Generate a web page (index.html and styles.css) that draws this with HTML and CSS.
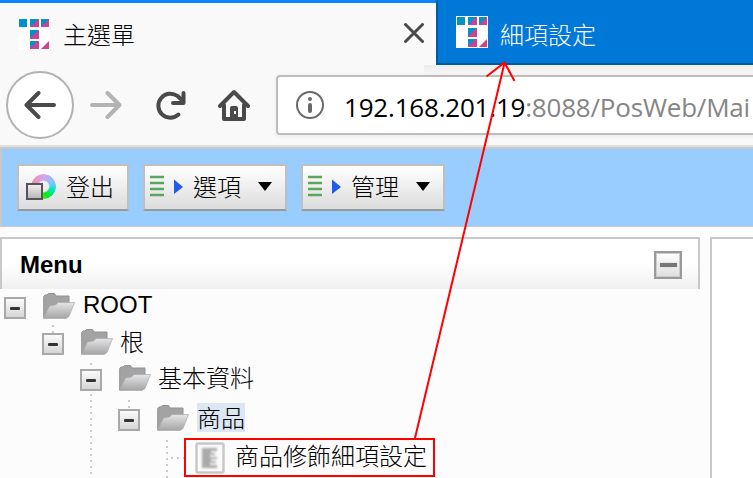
FILE: index.html
```html
<!DOCTYPE html>
<html lang="zh-Hant">
<head>
<meta charset="utf-8">
<title>主選單</title>
<link rel="stylesheet" href="styles.css">
</head>
<body>
<svg class="defs" width="0" height="0" aria-hidden="true">
  <defs>
    <linearGradient id="front" x1="0" y1="0" x2="0" y2="1"><stop offset="0" stop-color="#e4e5e7"/><stop offset="1" stop-color="#a4a4a4"/></linearGradient>
    <linearGradient id="square" x1="0" y1="0" x2="0" y2="1"><stop offset="0" stop-color="#f2f2f2"/><stop offset="1" stop-color="#b5b5b5"/></linearGradient>
    <filter id="soft"><feGaussianBlur stdDeviation="1"/></filter>
    <symbol id="logo" viewBox="0 0 32 32">
      <path fill="#fff" d="M0 0h32v32H0z"/>
      <path fill="#0292cb" d="M1 1h8v8H1zM12 1h9v8h-9zM23 1h8v8h-8zM12 12h9v9h-9zM12 23h9v8h-9z"/>
      <path fill="#cf4191" d="M12 9V8l3-1 3-4 3-2v8zM23 9l8-8v8zM12 21v-1l9-8v9zM12 31v-2l3-1 3-4 3-1v8zM23 31l8-8v8z"/>
    </symbol>
    <symbol id="folder" viewBox="0 0 32 27">
      <path fill="#a3a3a3" stroke="#929292" d="M.7 25V3.500L2 2h2l1.500-1.500h6L13 3h13v8L1 25z"/>
      <path fill="url(#front)" stroke="#aaa" stroke-width=".7" d="M.5 25.500 6.500 13l6-1L15 9.500h16.500L26 23.500l-3 2z"/>
    </symbol>
    <symbol id="list" viewBox="0 0 34 24">
      <path stroke="#5aa65c" stroke-width="2.600" d="M0 3h14M0 9h14M0 15h14M0 21h14"/>
      <path fill="#2459ee" d="M24 5.500l9 7.500-9 7z"/>
    </symbol>
  </defs>
</svg>

<header class="browser">
  <div class="tabs">
    <div class="tab active">
      <svg class="favicon"><use href="#logo"/></svg>
      <span class="tab-title">主選單</span>
      <svg class="close" viewBox="0 0 20 20"><path d="M1.500 1.500l17 17M18.500 1.500l-17 17"/></svg>
    </div>
    <div class="tab other">
      <svg class="favicon"><use href="#logo"/></svg>
      <span class="tab-title">細項設定</span>
    </div>
  </div>
  <div class="nav">
    <div class="back"><svg viewBox="0 0 32 28"><path d="M30 14H3M14.500 2L2.500 14l12 12"/></svg></div>
    <svg class="forward" viewBox="0 0 32 28"><path d="M2 14h27M17.500 2l12 12-12 12"/></svg>
    <svg class="reload" viewBox="0 0 31 30"><path d="M23.500 24.500A12 12 0 1 1 22.500 6L28 11"/><path d="M28.500 3v10H18"/></svg>
    <svg class="home" viewBox="0 0 32 33"><path d="M2 17L16 3l14 14M6 16v14h20V16"/><path class="fill" fill-rule="evenodd" d="M12 30V19q0-2 2-2h4q2 0 2 2v11zM16 22v3h2v-3z"/></svg>
    <div class="address">
      <svg class="info" viewBox="0 0 28 28"><circle cx="14" cy="14" r="13"/><path d="M14 14v6"/><path d="M14 8v.1"/></svg>
      <span class="url"><b>192.168.201.19</b>:8088/PosWeb/Mai</span>
    </div>
  </div>
</header>

<nav class="toolbar">
  <button class="button logout">
    <span class="icon"><i class="wheel"></i><svg viewBox="0 0 17 17"><rect x="1" y="1" width="15" height="15" fill="url(#square)" stroke="#555" stroke-width="2"/></svg></span>
    <span class="caption">登出</span>
  </button>
  <button class="button menu"><svg class="list"><use href="#list"/></svg><span class="caption">選項</span><i class="caret"></i></button>
  <button class="button menu"><svg class="list"><use href="#list"/></svg><span class="caption">管理</span><i class="caret"></i></button>
</nav>

<main class="content">
  <section class="side">
    <div class="panel-head"><h1>Menu</h1><span class="collapse"></span></div>
    <div class="tree">
      <svg class="guides" viewBox="0 0 250 189"><path d="M53 36v8M91 74v5M91 105v84M129 111v12M167 151v38M171 169h14"/></svg>
      <div class="row"><i class="toggle"></i><svg class="folder"><use href="#folder"/></svg><span class="label latin">ROOT</span></div>
      <div class="row l1"><i class="toggle"></i><svg class="folder"><use href="#folder"/></svg><span class="label">根</span></div>
      <div class="row l2"><i class="toggle"></i><svg class="folder"><use href="#folder"/></svg><span class="label">基本資料</span></div>
      <div class="row l3"><i class="toggle"></i><svg class="folder"><use href="#folder"/></svg><span class="label selected">商品</span></div>
      <div class="row leaf">
        <svg class="page" viewBox="0 0 30 32"><rect x="1.500" y="1.500" width="27" height="29" rx="1.500" fill="#fafafa" stroke="#c8c8c8" stroke-width="2.500"/><path filter="url(#soft)" fill="#aaa" d="M7 6h15v3h-6v2h4v2h-5v2h7v2h-6v2h5v2h-6v2h7v3H7z"/></svg>
        <span class="label">商品修飾細項設定</span>
      </div>
    </div>
  </section>
  <section class="pane"></section>
</main>

<svg class="annotation" viewBox="0 0 753 478"><rect x="185" y="439" width="249" height="37"/><path d="M415 438L504.500 63M486.500 76.500l18-14 10 18.500"/></svg>
</body>
</html>
```

FILE: styles.css
```css
* { box-sizing: border-box; }
body {
  margin: 0;
  width: 753px;
  height: 478px;
  overflow: hidden;
  position: relative;
  display: flex;
  flex-direction: column;
  background: #fcfcfc;
  color: #000;
  font: 300 24px "Noto Sans CJK TC", sans-serif;
}
svg { display: block; flex: none; fill: none; }
.defs { position: absolute; }

.browser { height: 147px; flex: none; background: #f9f9fa; border-bottom: 2px solid #e0e0e0; }
.tabs { display: flex; height: 65px; }
.tab { display: flex; align-items: center; }
.active { width: 436px; border-top: 3px solid #0a84ff; padding: 0 12px 0 18px; }
.other { flex: 1; background: #0078d7; border-left: 2px solid #005a9e; border-bottom: 2px solid #005a9e; padding: 2px 0 0 18px; color: #fff; }
.favicon { width: 32px; height: 32px; margin-top: -1px; }
.tab-title { margin-left: 12px; line-height: 36px; }
.active .tab-title { margin-left: 13px; }
.other .tab-title { padding-top: 2px; }
.close { width: 20px; height: 20px; margin: -2px 0 0 auto; stroke: #4a4a4b; stroke-width: 3; stroke-linecap: round; }

.nav { display: flex; align-items: center; height: 80px; padding-left: 6px; background: linear-gradient(#ededee, #f9f9fa 12px) 424px 0 no-repeat; }
.back { flex: none; width: 68px; height: 68px; border: 2px solid #b1b1b1; border-radius: 50%; background: #fff; display: grid; place-items: center; }
.back svg, .forward { width: 32px; height: 28px; stroke: #4a4a4b; stroke-width: 4; stroke-linecap: round; stroke-linejoin: round; }
.forward { margin-left: 16px; stroke: #b3b3b4; }
.reload { width: 31px; height: 30px; margin-left: 33px; stroke: #4a4a4b; stroke-width: 4; stroke-linecap: round; stroke-linejoin: round; }
.home { width: 32px; height: 33px; margin-left: 32px; stroke: #4a4a4b; stroke-width: 4; stroke-linecap: round; stroke-linejoin: round; }
.home .fill { fill: #4a4a4b; stroke: none; }
.address { display: flex; align-items: center; width: 490px; flex: none; height: 60px; margin-left: 26px; padding-left: 18px; border: 2px solid #bdbdbd; border-radius: 4px; background: #fff; box-shadow: 0 1px 4px rgba(0, 0, 0, .08); }
.info { width: 28px; height: 28px; stroke: #6a6a6b; stroke-width: 2; }
.info path { stroke-width: 4; stroke-linecap: round; }
.url { margin: 3px 0 0 20px; font: 400 26px "Open Sans", sans-serif; letter-spacing: -.2px; color: #858585; white-space: nowrap; }
.url b { font-weight: 400; color: #000; }

.toolbar { flex: none; display: flex; align-items: flex-start; gap: 14px; height: 80px; padding: 15px 0 0 15px; background: #9cf; border: 2px solid #c8c8c8; border-right: 0; border-bottom-width: 1px; }
.button { display: flex; align-items: center; height: 47px; padding: 0; border: 2px solid #bfbfbf; border-bottom-color: #999; background: linear-gradient(#fff, #ececec 55%, #dcdcdc); color: #000; font: inherit; line-height: 36px; }
.caption { margin-top: -4px; }
.logout { width: 112px; padding-left: 7px; }
.icon { display: grid; width: 30px; height: 26px; margin: -1px 10px 0 0; }
.icon > * { grid-area: 1 / 1; }
.wheel { width: 25px; height: 25px; justify-self: end; align-self: start; border-radius: 50%; background: conic-gradient(#d6a4ef, #7cc5ff 70deg, #00e6c0 110deg, #00ed00 165deg, #9ae76a 210deg, #f08cac 280deg, #d6a4ef); -webkit-mask: radial-gradient(circle, transparent 5px, #000 6.500px); mask: radial-gradient(circle, transparent 5px, #000 6.500px); }
.icon svg { width: 17px; height: 17px; align-self: end; z-index: 1; }
.menu { width: 144px; padding-left: 5px; }
.list { width: 34px; height: 24px; margin: -3px 9px 0 0; }
.caret { margin: -3px 0 0 17px; border: solid transparent; border-width: 9px 7.500px 0; border-top-color: #000; }

.content { display: flex; gap: 10px; flex: 1; padding-top: 10px; }
.side { width: 700px; }
.panel-head { display: flex; align-items: center; justify-content: space-between; height: 52px; padding: 1px 16px 0 18px; border: 2px solid #c8c8c8; border-bottom: 0; background: linear-gradient(#fff 50%, #f0f0f0); }
.panel-head h1 { margin: 0; font: bold 24px "Liberation Sans", sans-serif; }
.collapse { width: 28px; height: 28px; border: 2px solid #999; box-shadow: inset 0 0 0 1px #ccc; display: grid; place-items: center; background: linear-gradient(#fff, #dedede); }
.collapse::after { content: ""; width: 17px; height: 4px; background: #777; box-shadow: 0 0 1px #888; }

.tree { position: relative; height: 189px; overflow: hidden; }
.guides { position: absolute; left: 0; top: 0; width: 250px; height: 189px; stroke: #ccc; stroke-width: 2; stroke-dasharray: 2 4; }
.row { display: flex; height: 36px; padding-left: 4px; align-items: flex-start; position: relative; }
.l1 { padding-left: 42px; }
.l2 { padding-left: 80px; height: 40px; }
.l3 { padding-left: 118px; height: 38px; }
.leaf { padding-left: 195px; height: 39px; }
.toggle { width: 22px; height: 22px; margin-top: 8px; flex: none; border: 2px solid #a8a8a8; background: linear-gradient(#fafafa, #d6d6d6); display: grid; place-items: center; }
.toggle::after { content: ""; width: 10px; height: 3px; border-radius: 1px; background: #333; }
.folder { width: 32px; height: 27px; margin: 4px 7px 0 17px; }
.label { line-height: 32px; white-space: nowrap; }
.l3 .label { height: 29px; line-height: 27px; margin: 2px 0 0 1px; background: #dce7f3; }
.latin { margin-left: 1px; font: 400 24px/32px "Liberation Sans", sans-serif; }
.page { width: 30px; height: 32px; margin: 3px 10px 0 0; }

.pane { flex: 1; border: 2px solid #c8c8c8; border-width: 2px 0 0 2px; background: #fff; }
.annotation { position: absolute; left: 0; top: 0; width: 753px; height: 478px; stroke: #f00; stroke-width: 2; pointer-events: none; }
```
